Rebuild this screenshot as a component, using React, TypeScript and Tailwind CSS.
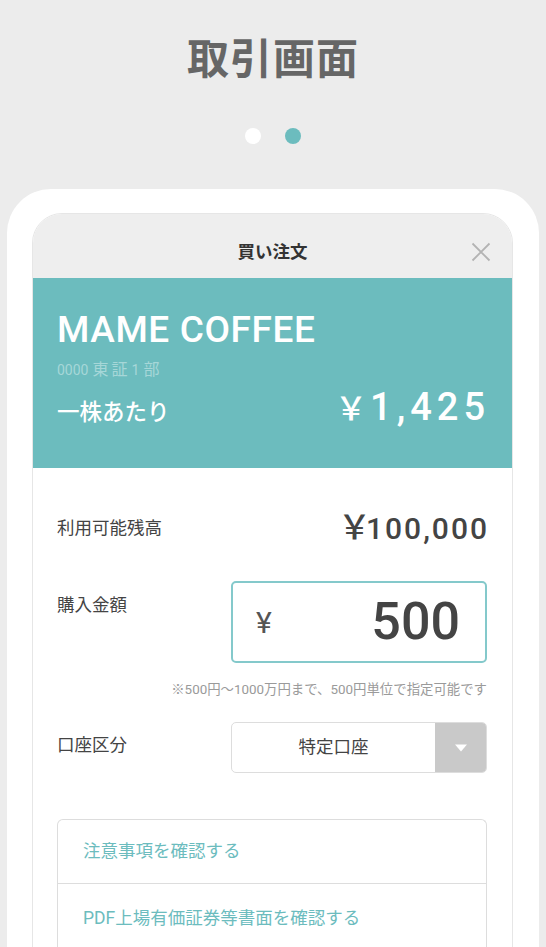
const font = { fontFamily: 'Roboto, "Noto Sans CJK JP", sans-serif' };

function CloseIcon() {
    return (
        <svg width="20" height="20" viewBox="0 0 20 20" className="absolute right-[21px] top-[28px]">
            <path d="M1.5 1.5 L18.5 18.5 M18.5 1.5 L1.5 18.5" stroke="#b3b3b3" strokeWidth="1.8" />
        </svg>
    );
}

function App() {
    return (
        <div
            className="flex h-[947px] w-full flex-col items-center overflow-hidden bg-[#ececec]"
            style={font}
        >
            <h1 className="mt-[33px] text-[42px] font-bold leading-[54px] tracking-[1px] text-[#666666]">
                取引画面
            </h1>

            <div className="mt-[41px] flex items-center gap-[24px]">
                <span className="size-[16px] rounded-full bg-white" />
                <span className="size-[16px] rounded-full bg-[#6cbcbe]" />
            </div>

            {/* phone frame */}
            <div className="mt-[45px] w-[532px] flex-1 rounded-t-[44px] bg-white pl-[25px] pr-[26px] pt-[24px]">
                <div className="flex h-full flex-col overflow-hidden rounded-t-[30px] border border-[#e6e6e6]">
                    <div className="relative flex h-[64px] items-center justify-center bg-[#eeeeee] pt-[12px]">
                        <span className="text-[17.5px] font-bold leading-[24px] text-[#333333]">買い注文</span>
                        <CloseIcon />
                    </div>

                    <div className="flex h-[190px] flex-col bg-[#6cbcbe] pl-[24px] pr-[27px] pt-[32px] text-white">
                        <p className="text-[37px] font-medium leading-[40px] tracking-[0.6px]">MAME COFFEE</p>
                        <p className="mt-[11px] flex items-baseline text-[14px] leading-[18px] text-[#a6d7d8]">
                            <span>0000</span>
                            <span className="ml-[4px] text-[16px] tracking-[3px]">東証</span>
                            <span className="ml-[1px]">1</span>
                            <span className="ml-[4px] text-[16px]">部</span>
                        </p>
                        <div className="mt-[6px] flex items-baseline justify-between leading-[44px]">
                            <span className="text-[22.5px] font-medium">一株あたり</span>
                            <span className="flex items-baseline">
                                <span className="mr-[3px] text-[32px] font-medium">￥</span>
                                <span className="-mr-[5px] text-[38px] font-medium tracking-[5px]">1,425</span>
                            </span>
                        </div>
                    </div>

                    <div className="flex flex-1 flex-col bg-white pl-[24px] pr-[25px] pt-[40px]">
                        <div className="flex h-[40px] items-center justify-between">
                            <span className="text-[17.5px] text-[#444444]">利用可能残高</span>
                            <span className="flex items-baseline font-medium text-[#444444]">
                                <span className="text-[33px] tracking-[-5px]">￥</span>
                                <span className="-mr-[2px] text-[30px] tracking-[2px]">100,000</span>
                            </span>
                        </div>

                        <div className="mt-[33px] flex justify-between">
                            <span className="mt-[12px] text-[17.5px] leading-[24px] text-[#444444]">購入金額</span>
                            <div className="flex h-[82px] w-[256px] items-center justify-between rounded-[5px] border-2 border-[#84c9cb] pl-[23px] pr-[25px]">
                                <span className="text-[30px] text-[#555555]">¥</span>
                                <span className="text-[52px] font-medium leading-[60px] text-[#444444]">500</span>
                            </div>
                        </div>

                        <p className="mt-[18px] text-right text-[13.4px] leading-[18px] text-[#9a9a9a]">
                            ※500円〜1000万円まで、500円単位で指定可能です
                        </p>

                        <div className="mt-[23px] flex items-center justify-between">
                            <span className="mb-[4px] text-[17.5px] text-[#444444]">口座区分</span>
                            <div className="flex h-[51px] w-[256px] overflow-hidden rounded-[5px] border border-[#dddddd]">
                                <span className="flex flex-1 items-center justify-center text-[17.5px] text-[#444444]">
                                    特定口座
                                </span>
                                <span className="flex w-[51px] items-center justify-center bg-[#c9c9c9]">
                                    <svg width="12" height="8" viewBox="0 0 12 8">
                                        <path d="M0 0.5 H12 L6 7.5 Z" fill="#ffffff" />
                                    </svg>
                                </span>
                            </div>
                        </div>

                        <div className="mt-[46px] flex flex-col rounded-t-[6px] border border-b-0 border-[#dddddd]">
                            <div className="flex h-[64px] items-center border-b border-[#dddddd] px-[25px] text-[17.5px] text-[#6cbcbe]">
                                注意事項を確認する
                            </div>
                            <div className="flex h-[68px] items-center px-[25px] text-[17.5px] text-[#6cbcbe]">
                                PDF上場有価証券等書面を確認する
                            </div>
                        </div>
                    </div>
                </div>
            </div>
        </div>
    );
}

export default App;
